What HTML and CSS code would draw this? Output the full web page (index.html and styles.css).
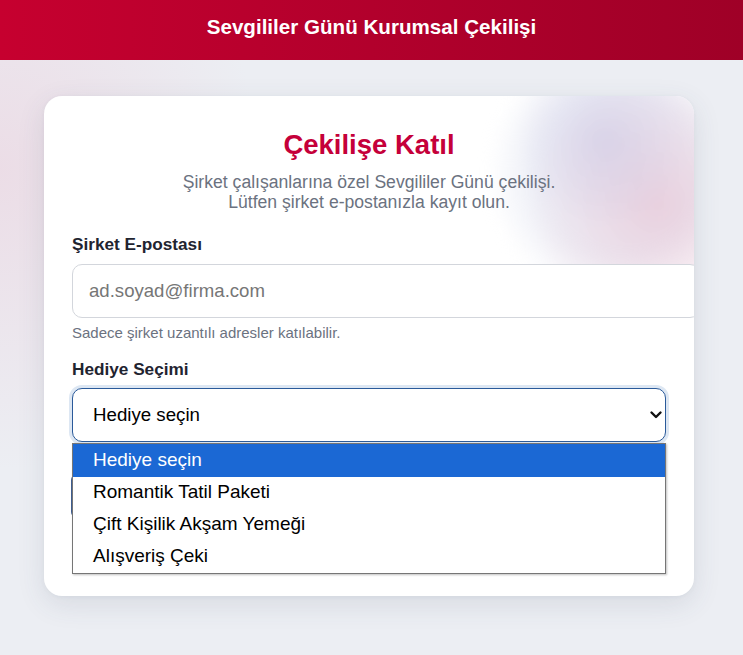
FILE: index.html
```html
<!DOCTYPE html>
<html lang="tr">
<head>
<meta charset="utf-8">
<title>Sevgililer Günü Kurumsal Çekilişi</title>
<link rel="stylesheet" href="styles.css">
</head>
<body>
<header class="topbar">
  <h1 class="topbar-title">Sevgililer Günü Kurumsal Çekilişi</h1>
</header>
<main class="page">
  <section class="card">
    <div class="card-blob"></div>
    <h2 class="card-title">Çekilişe Katıl</h2>
    <p class="card-sub">Şirket çalışanlarına özel Sevgililer Günü çekilişi.<br>Lütfen şirket e-postanızla kayıt olun.</p>
    <div class="field">
      <label class="field-label">Şirket E-postası</label>
      <input class="text-input" type="email" placeholder="ad.soyad@firma.com">
      <div class="field-hint">Sadece şirket uzantılı adresler katılabilir.</div>
    </div>
    <div class="field field-select">
      <label class="field-label">Hediye Seçimi</label>
      <div class="select-wrap">
        <div class="select-box">
          <span>Hediye seçin</span>
          <svg class="chevron" width="14" height="10" viewBox="0 0 14 10"><path d="M2.5 2.5 L7 7 L11.5 2.5" fill="none" stroke="#111" stroke-width="2.4" stroke-linecap="round" stroke-linejoin="round"/></svg>
        </div>
        <ul class="listbox">
          <li class="option selected">Hediye seçin</li>
          <li class="option">Romantik Tatil Paketi</li>
          <li class="option">Çift Kişilik Akşam Yemeği</li>
          <li class="option">Alışveriş Çeki</li>
        </ul>
      </div>
    </div>
    <button class="submit">Katıl</button>
  </section>
</main>
</body>
</html>
```
FILE: styles.css
```css
* { box-sizing: content-box; }
html, body { margin: 0; padding: 0; }
body {
  font-family: "Liberation Sans", Arial, sans-serif;
  background:
    radial-gradient(ellipse 260px 300px at 0px 170px, rgba(235, 200, 215, 0.45), rgba(235, 200, 215, 0) 100%),
    #eceef3;
  min-height: 655px;
  overflow: hidden;
}
.topbar {
  box-sizing: border-box;
  height: 60px;
  padding-bottom: 7px;
  background: linear-gradient(90deg, #c6002f 0%, #b2002c 50%, #9f0027 100%);
  display: flex;
  align-items: center;
  justify-content: center;
}
.topbar-title {
  margin: 0;
  color: #fff;
  font-size: 20.6px;
  font-weight: bold;
}
.page {
  padding: 36px 49px 0 44px;
}
.card {
  position: relative;
  overflow: hidden;
  width: 594px;
  padding: 32px 28px 78px 28px;
  background: #fff;
  border-radius: 18px;
  box-shadow: 0 8px 28px rgba(60, 70, 100, 0.12), 0 1px 4px rgba(60,70,100,0.05);
}
.card-blob {
  position: absolute;
  left: 444px;
  top: -56px;
  width: 264px;
  height: 264px;
  border-radius: 50%;
  background:
    radial-gradient(circle at 44% 38%, rgba(205, 200, 228, 0.6) 0%, rgba(205, 200, 228, 0) 40%),
    radial-gradient(circle at 64% 62%, rgba(228, 170, 192, 0.45) 0%, rgba(228, 170, 192, 0) 55%),
    radial-gradient(circle at 50% 50%, rgba(236, 238, 246, 0.95) 45%, rgba(240, 242, 248, 0) 71%);
  filter: blur(7px);
  pointer-events: none;
}
.card-title {
  position: relative;
  margin: 0 0 10px 0;
  text-align: center;
  color: #c5003a;
  font-size: 27.5px;
  line-height: 34px;
  font-weight: bold;
}
.card-sub {
  position: relative;
  margin: 0 0 22px 0;
  text-align: center;
  color: #6b7280;
  font-size: 17.6px;
  line-height: 20px;
}
.field { position: relative; }
.field-label {
  display: block;
  font-size: 17.2px;
  line-height: 20px;
  font-weight: bold;
  color: #1f2430;
  margin-bottom: 10px;
}
.text-input {
  display: block;
  width: 100%;
  height: 52px;
  padding: 0 16px;
  border: 1px solid #d3d6dc;
  border-radius: 10px;
  font-family: "Liberation Sans", Arial, sans-serif;
  font-size: 18.6px;
  color: #111;
  background: #fff;
  outline: none;
}
.text-input::placeholder { color: #767676; }
.field-hint {
  margin-top: 7px;
  font-size: 15px;
  line-height: 16px;
  color: #6b7280;
}
.field-select { margin-top: 18px; }
.field-select .field-label { margin-bottom: 9px; }
.select-wrap { position: relative; }
.select-box {
  box-sizing: border-box;
  height: 54px;
  display: flex;
  align-items: center;
  justify-content: space-between;
  padding: 0 2px 0 20px;
  border: 1.5px solid #2a5a9a;
  border-radius: 10px;
  box-shadow: 0 0 0 3px #dde7f3;
  font-size: 18.7px;
  color: #000;
  background: #fff;
}
.chevron { display: block; }
.listbox {
  position: absolute;
  left: 0;
  top: 55px;
  box-sizing: border-box;
  width: 594px;
  margin: 0;
  padding: 0;
  list-style: none;
  background: #fff;
  border: 1px solid #767676;
  box-shadow: 1px 1px 2px rgba(0,0,0,0.25);
  z-index: 5;
}
.option {
  height: 32px;
  line-height: 30px;
  padding-left: 20px;
  font-size: 19px;
  color: #000;
  box-sizing: border-box;
}
.option.selected {
  background: #1b68d4;
  color: #fff;
  height: 33px;
  line-height: 31px;
}
.submit {
  display: block;
  box-sizing: border-box;
  width: 594px;
  height: 44px;
  margin-top: 32px;
  margin-left: -1px;
  border: none;
  border-radius: 6px;
  background: linear-gradient(90deg, #3f5f92, #c5003a);
  color: #fff;
  font-family: "Liberation Sans", Arial, sans-serif;
  font-size: 17px;
  font-weight: bold;
}
```
